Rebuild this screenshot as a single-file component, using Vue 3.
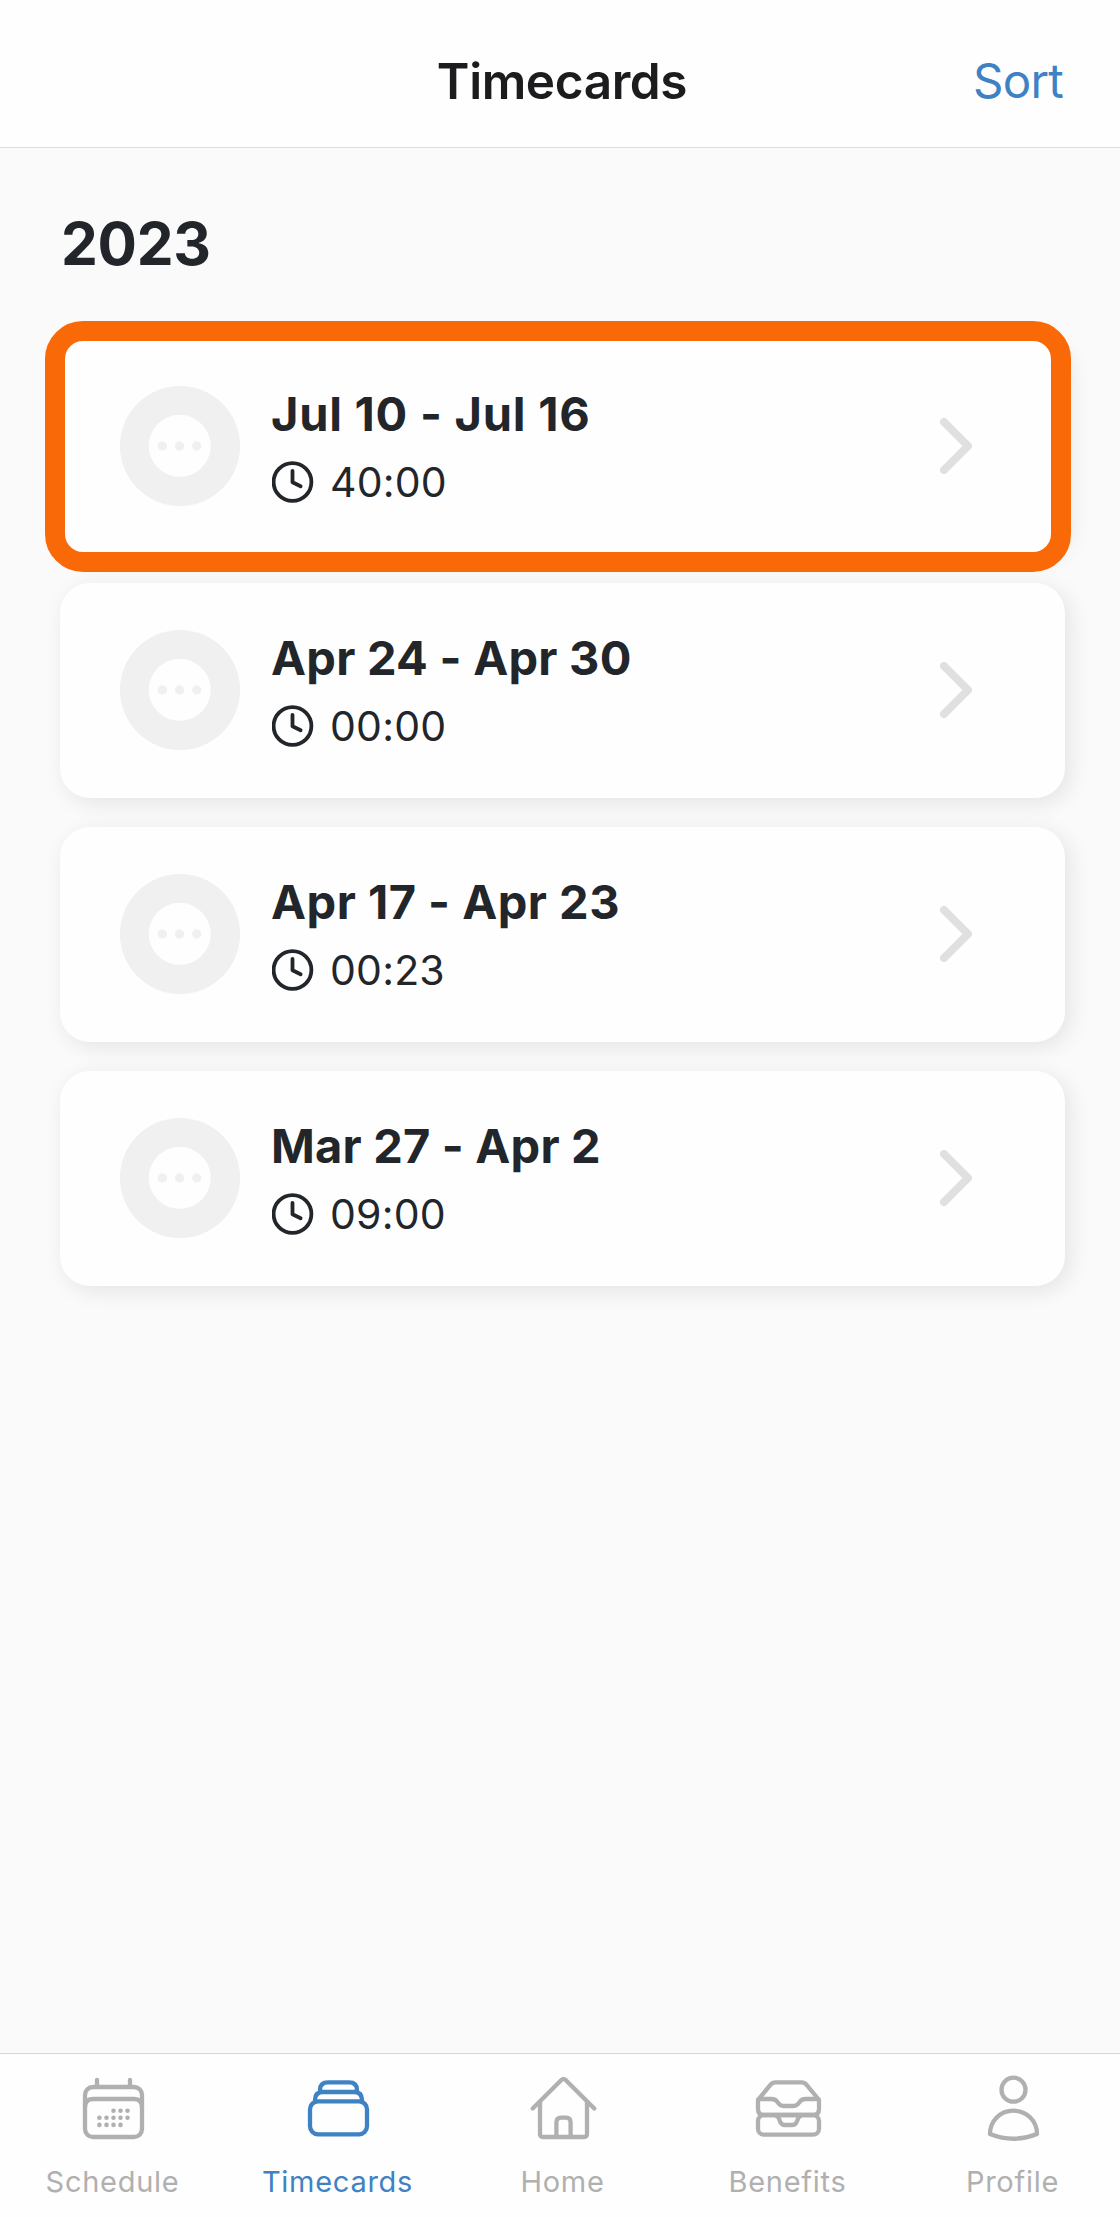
<script setup>
const cards = [
  { range: 'Jul 10 - Jul 16', hours: '40:00', tracking: 0.75, highlighted: true },
  { range: 'Apr 24 - Apr 30', hours: '00:00', tracking: 0.25 },
  { range: 'Apr 17 - Apr 23', hours: '00:23', tracking: 0.48 },
  { range: 'Mar 27 - Apr 2', hours: '09:00', tracking: 0.2 },
]

const calendarDots = [
  [40.5, 45.7], [47.5, 45.7], [54.5, 45.7],
  [26.4, 52.8], [33.5, 52.8], [40.5, 52.8], [47.5, 52.8], [54.5, 52.8],
  [26.4, 59.9], [33.5, 59.9], [40.5, 59.9], [47.5, 59.9],
]
</script>

<template>
  <div class="screen">
    <header class="header">
      <h1 class="title">Timecards</h1>
      <a class="sort">Sort</a>
    </header>

    <main class="content">
      <h2 class="year">2023</h2>
      <div class="list">
        <article v-for="card in cards" :key="card.range" class="card">
          <svg class="status" viewBox="0 0 120 120">
            <circle cx="60" cy="60" r="60" fill="#f0f0f0" />
            <circle cx="59.7" cy="59.8" r="31" fill="#fefefe" />
            <g fill="#f0f0f0">
              <circle cx="42.4" cy="60" r="4.7" />
              <circle cx="59.6" cy="60" r="4.7" />
              <circle cx="76.8" cy="60" r="4.7" />
            </g>
          </svg>
          <div class="info">
            <h3 class="range" :style="{ letterSpacing: card.tracking + 'px' }">{{ card.range }}</h3>
            <div class="time">
              <svg class="clock" viewBox="0 0 42 42">
                <circle cx="20.5" cy="21" r="18.9" />
                <path d="M20.5 9.8V21.3L28.6 25.3" />
              </svg>
              <span class="hours">{{ card.hours }}</span>
            </div>
          </div>
          <svg class="chevron" viewBox="0 0 32 56">
            <path d="M4 4L28 28L4 52" />
          </svg>
          <div v-if="card.highlighted" class="highlight"></div>
        </article>
      </div>
    </main>

    <nav class="tabs">
      <a class="tab">
        <svg class="icon" viewBox="0 0 79 80">
          <rect x="12" y="22" width="57" height="50" rx="8" />
          <path d="M12 42Q12 34 20 34H61Q69 34 69 42M24 15V21M57 15V21" />
          <g class="dots">
            <circle v-for="(dot, i) in calendarDots" :key="i" :cx="dot[0]" :cy="dot[1]" r="2.3" />
          </g>
        </svg>
        <span class="label">Schedule</span>
      </a>
      <a class="tab active">
        <svg class="icon" viewBox="0 0 79 80">
          <rect x="12" y="36.3" width="57" height="33" rx="8" />
          <path d="M17 37V35Q17 27 25 27H56Q64 27 64 35V37M22 27V25Q22 17.3 30 17.3H51Q59 17.3 59 25V27" />
        </svg>
        <span class="label">Timecards</span>
      </a>
      <a class="tab">
        <svg class="icon" viewBox="0 0 79 80">
          <path d="M9.7 43.5L38.6 14.8Q40.5 13 42.4 14.8L71.3 43.5" />
          <path d="M17 37V69Q17 72 20 72H61Q64 72 64 69V37M33.4 72V57.5Q33.4 52.7 38 52.7H43Q47.6 52.7 47.6 57.5V72" />
        </svg>
        <span class="label">Home</span>
      </a>
      <a class="tab">
        <svg class="icon" viewBox="0 0 79 80">
          <path d="M10.7 34L22.4 19.8Q24.5 17.3 27.5 17.3H53.5Q56.5 17.3 58.6 19.8L70.3 34" />
          <path d="M10 36Q10 34 12 34H23.5Q27 34 29 36.5L31 39Q33 41 35.5 41H45.5Q48 41 50 39L52 36.5Q54 34 57.5 34H69Q71 34 71 36V44Q71 50 65 50H16Q10 50 10 44Z" />
          <rect x="10" y="50" width="61" height="19.7" rx="6" />
          <path d="M29 51.5Q30.5 52 31.5 55L32.5 57.5Q33.8 60 37 60H44Q47.2 60 48.5 57.5L49.5 55Q50.5 52 52 51.5" />
        </svg>
        <span class="label">Benefits</span>
      </a>
      <a class="tab">
        <svg class="icon" viewBox="0 0 79 80">
          <circle cx="40.5" cy="24.7" r="12" />
          <path d="M17 69C17 56 27 45.7 40.5 45.7S64 56 64 69Q40.5 78.5 17 69Z" />
        </svg>
        <span class="label">Profile</span>
      </a>
    </nav>
  </div>
</template>

<style>
body {
  margin: 0;
}
</style>

<style scoped>
.screen {
  display: flex;
  flex-direction: column;
  width: 1120px;
  height: 2217px;
  overflow: hidden;
  background: #fafafa;
  color: #22262b;
  font-family: Inter, 'Liberation Sans', sans-serif;
}

h1,
h2,
h3 {
  margin: 0;
}

.header {
  box-sizing: border-box;
  display: grid;
  grid-template-columns: 1fr auto 1fr;
  align-items: center;
  height: 148px;
  padding: 14px 57px 0 61px;
  border-bottom: 1px solid #dcdcdc;
  background: #fefefe;
}

.title {
  grid-column: 2;
  color: #1c1c1e;
  font-size: 49.5px;
  font-weight: 600;
  line-height: 60px;
  letter-spacing: -0.4px;
}

.sort {
  justify-self: end;
  color: #3f82c4;
  font-size: 47.5px;
  font-weight: 380;
  line-height: 60px;
  letter-spacing: -0.8px;
}

.content {
  flex: 1;
  padding: 60px 55px 0 60px;
}

.year {
  height: 72px;
  padding-left: 1px;
  font-size: 58.5px;
  font-weight: 700;
  line-height: 72px;
  letter-spacing: -0.3px;
}

.list {
  display: flex;
  flex-direction: column;
  gap: 29.5px;
  margin-top: 59px;
}

.card {
  box-sizing: border-box;
  position: relative;
  display: flex;
  align-items: center;
  height: 214.5px;
  padding: 0 93px 0 60px;
  border-radius: 30px;
  background: #fefefe;
  box-shadow: 5px 5px 22px rgba(0, 0, 0, 0.09);
}

.status {
  width: 120px;
  height: 120px;
}

.info {
  flex: 1;
  margin-bottom: 2px;
  margin-left: 32px;
}

.range {
  margin-left: -1px;
  font-size: 47px;
  font-weight: 700;
  line-height: 60px;
  white-space: nowrap;
}

.time {
  display: flex;
  align-items: center;
  margin-top: 13px;
  gap: 16px;
}

.clock {
  width: 42px;
  height: 42px;
  fill: none;
  stroke: #22262b;
  stroke-width: 3.8;
  stroke-linecap: round;
  stroke-linejoin: round;
}

.hours {
  font-size: 41px;
  font-weight: 370;
  line-height: 50px;
  letter-spacing: 0.2px;
}

.chevron {
  width: 32px;
  height: 56px;
  fill: none;
  stroke: #e0e0e0;
  stroke-width: 8;
  stroke-linecap: round;
  stroke-linejoin: round;
}

.highlight {
  box-sizing: border-box;
  position: absolute;
  top: -18px;
  left: -15px;
  width: 1026px;
  height: 251px;
  border: 20px solid #f96908;
  border-radius: 38px;
}

.tabs {
  box-sizing: border-box;
  display: flex;
  height: 164px;
  border-top: 1px solid #d6d6d6;
  background: #fefefe;
}

.tab {
  display: flex;
  flex: 0 0 225px;
  flex-direction: column;
  align-items: center;
  padding-top: 11px;
  color: #b0b0b0;
}

.active {
  color: #3f82c4;
}

.icon {
  width: 79px;
  height: 80px;
  fill: none;
  stroke: currentColor;
  stroke-width: 4.3;
  stroke-linecap: round;
  stroke-linejoin: round;
}

.dots {
  fill: currentColor;
  stroke: none;
}

.label {
  margin-top: 19px;
  font-size: 29px;
  font-weight: 370;
  line-height: 36px;
  letter-spacing: 0.72px;
}
</style>
